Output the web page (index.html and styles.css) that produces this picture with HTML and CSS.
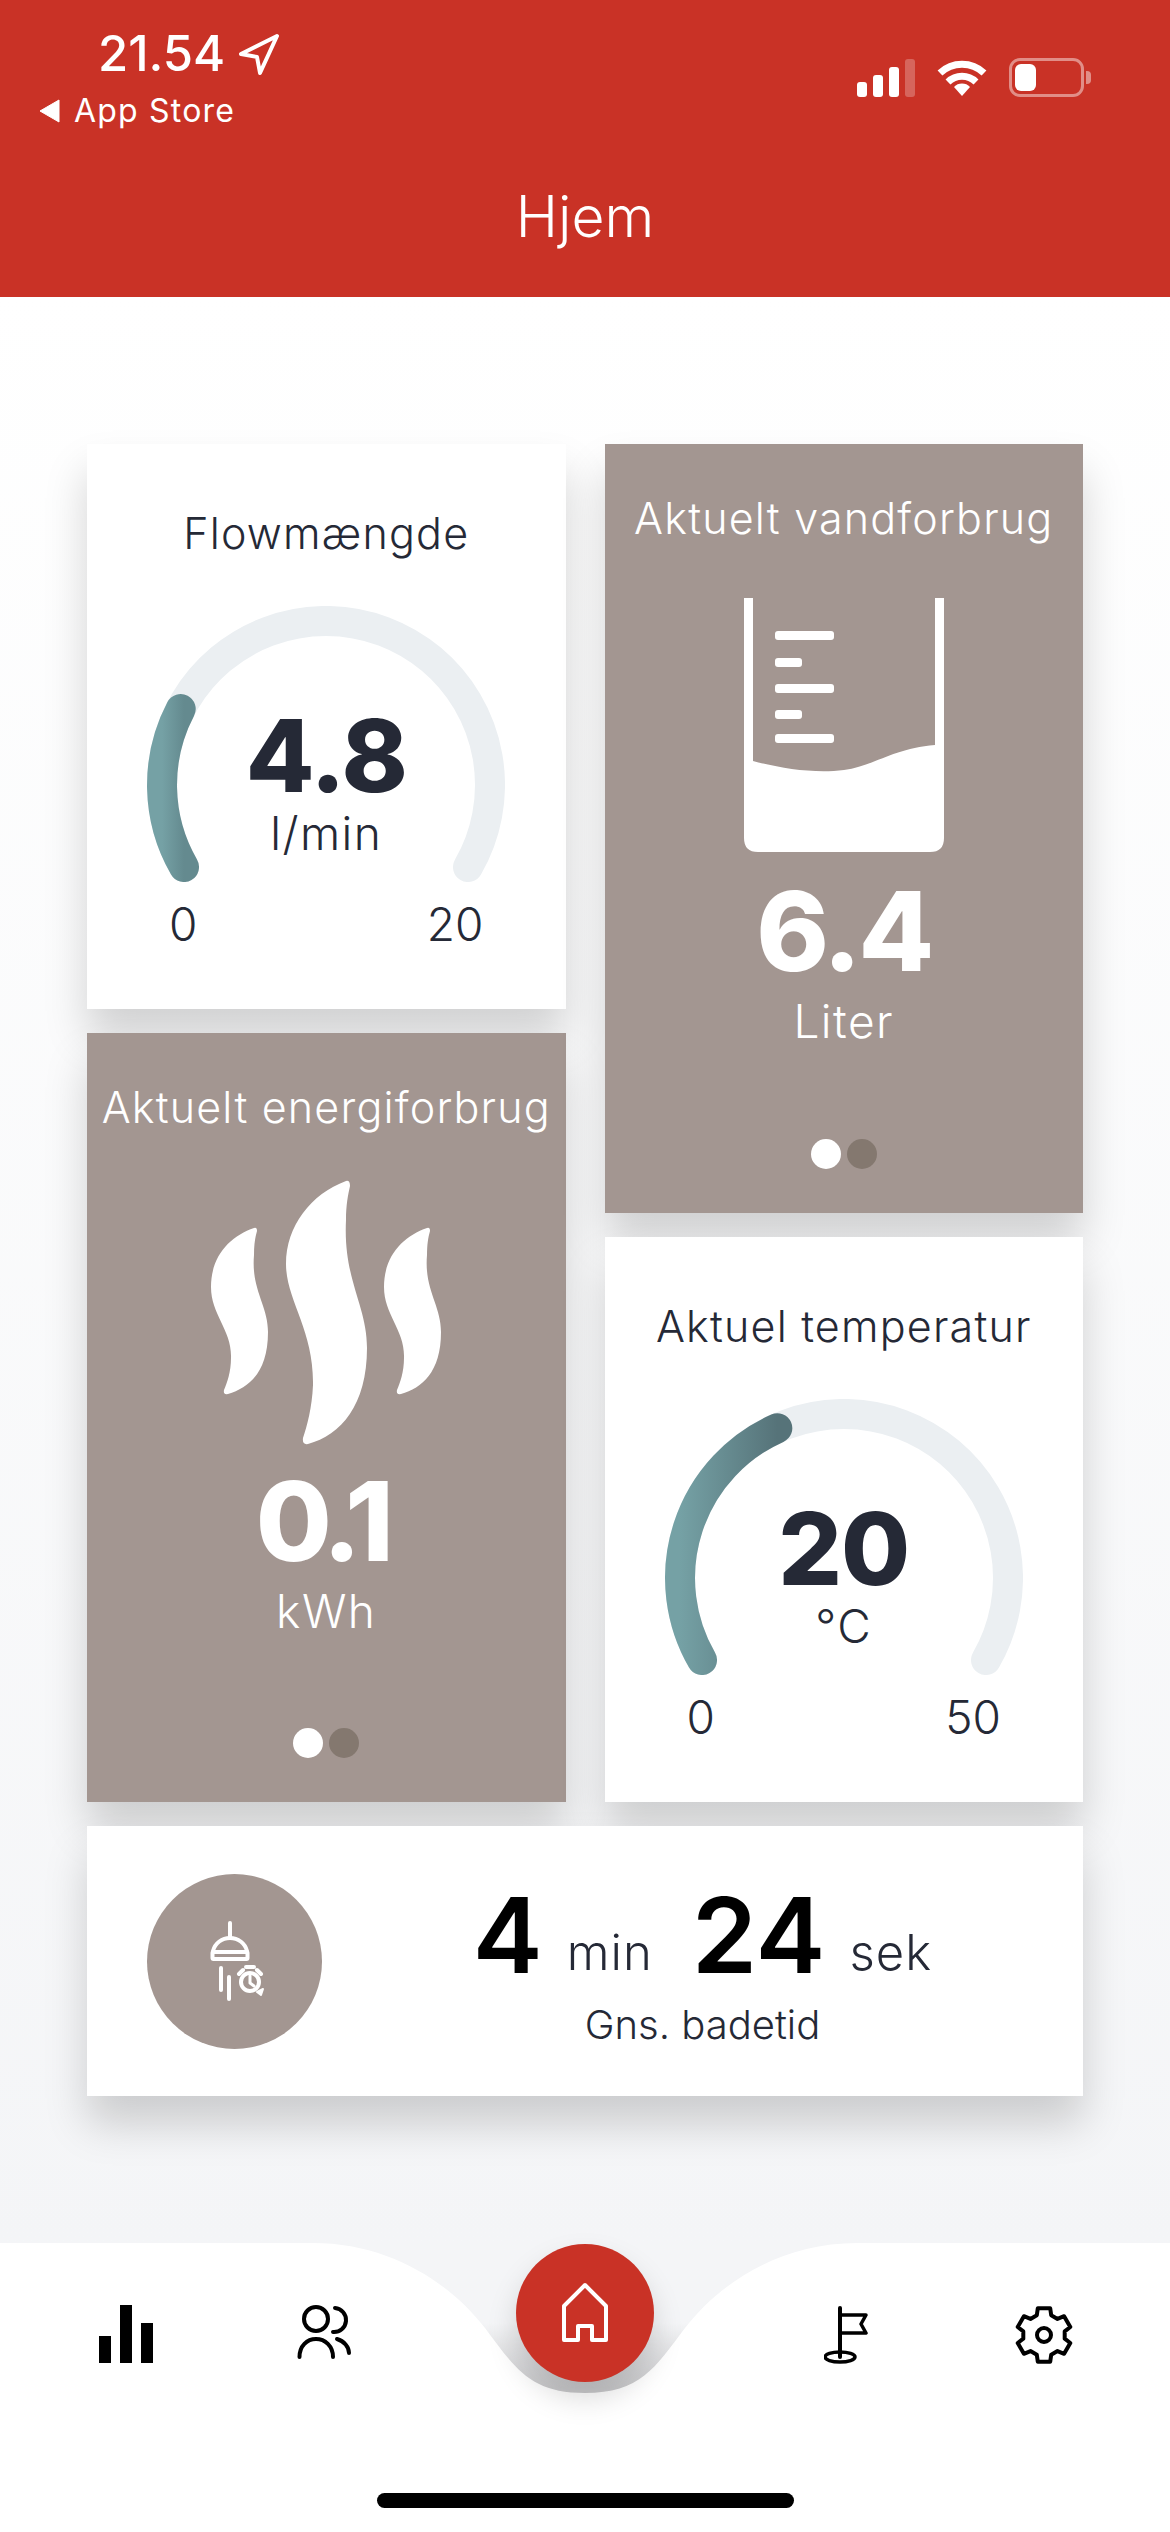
FILE: index.html
```html
<!DOCTYPE html>
<html lang="da">
<head>
    <meta charset="UTF-8">
    <title>Hjem</title>
    <link rel="stylesheet" href="styles.css">
</head>
<body>
    <header class="top-bar">
        <div class="status-bar">
            <div class="status-left">
                <div class="time-row">
                    <span class="time">21.54</span>
                    <svg class="location-icon" width="42" height="42" viewBox="0 0 42 42"><path d="M39 3 L3 21 L19 24 L22 40 Z" fill="none" stroke="#fff" stroke-width="4" stroke-linejoin="round"/></svg>
                </div>
                <div class="back-row">
                    <svg width="21" height="24" viewBox="0 0 21 24"><path d="M20 1 V23 L1 12 Z" fill="#fff" stroke="#fff" stroke-linejoin="round"/></svg>
                    <span>App Store</span>
                </div>
            </div>
            <div class="status-right">
                <svg width="58" height="38" viewBox="0 0 58 38">
                    <rect x="0" y="23" width="10" height="15" rx="3" fill="#fff"/>
                    <rect x="16" y="16" width="10" height="22" rx="3" fill="#fff"/>
                    <rect x="32" y="8" width="10" height="30" rx="3" fill="#fff"/>
                    <rect x="48" y="0" width="10" height="38" rx="3" fill="#fff" opacity="0.25"/>
                </svg>
                <svg width="50" height="38" viewBox="0 0 50 38">
                    <path d="M3 14 A 32 32 0 0 1 47 14" fill="none" stroke="#fff" stroke-width="7"/>
                    <path d="M11 23 A 20 20 0 0 1 39 23" fill="none" stroke="#fff" stroke-width="7"/>
                    <path d="M25 37 L17 28 A 11 11 0 0 1 33 28 Z" fill="#fff"/>
                </svg>
                <div class="battery">
                    <div class="battery-level"></div>
                </div>
            </div>
        </div>
        <h1 class="page-title">Hjem</h1>
    </header>

    <main class="dashboard">
        <div class="columns">
            <div class="column">
                <section class="card card-gauge">
                    <h2 class="card-title">Flowmængde</h2>
                    <div class="gauge">
                        <svg width="358" height="276" viewBox="0 0 358 276">
                            <defs>
                                <linearGradient id="flowFill" x1="0" y1="0" x2="1" y2="0">
                                    <stop offset="0" stop-color="#75a1a5"/>
                                    <stop offset="1" stop-color="#648a8f"/>
                                </linearGradient>
                            </defs>
                            <path d="M37 261 A164 164 0 1 1 321 261" fill="none" stroke="#ebeff2" stroke-width="30" stroke-linecap="round"/>
                            <path d="M37 261 A164 164 0 0 1 33.7 103" fill="none" stroke="url(#flowFill)" stroke-width="30" stroke-linecap="round"/>
                        </svg>
                        <div class="gauge-text">
                            <div class="value">4.8</div>
                            <div class="unit">l/min</div>
                        </div>
                    </div>
                    <div class="gauge-scale"><span>0</span><span>20</span></div>
                </section>

                <section class="card card-brown card-energy">
                    <h2 class="card-title">Aktuelt energiforbrug</h2>
                    <svg class="steam-icon" width="231" height="266" viewBox="0 0 231 266" fill="#fff">
                        <path d="M43 48 C20 56 0 75 0 107 C0 135 21 150 20 178 C20 192 16 203 13 210 Q12 215 17 214 C38 208 57 192 57 152 C57 125 40 110 43 75 C43 65 44 58 46 51 Q46 47 43 48 Z"/>
                        <path d="M135 1 C100 14 75 46 75 84 C75 120 103 150 102 205 C101 228 96 246 92 258 Q91 265 97 264 C130 255 156 225 156 168 C156 125 132 100 135 40 C135 25 137 15 139 6 Q139 0 135 1 Z"/>
                        <path transform="translate(173 0)" d="M43 48 C20 56 0 75 0 107 C0 135 21 150 20 178 C20 192 16 203 13 210 Q12 215 17 214 C38 208 57 192 57 152 C57 125 40 110 43 75 C43 65 44 58 46 51 Q46 47 43 48 Z"/>
                    </svg>
                    <div class="value value-large">0.1</div>
                    <div class="unit">kWh</div>
                    <div class="dots"><span class="dot active"></span><span class="dot"></span></div>
                </section>
            </div>

            <div class="column">
                <section class="card card-brown card-water">
                    <h2 class="card-title">Aktuelt vandforbrug</h2>
                    <svg class="beaker-icon" width="200" height="254" viewBox="0 0 200 254" fill="#fff">
                        <path d="M0 0 H9 V163 C35 170 70 176 100 172 C130 168 150 150 191 147 V0 H200 V240 Q200 254 186 254 H14 Q0 254 0 240 Z"/>
                        <rect x="31" y="33" width="59" height="9" rx="3"/>
                        <rect x="31" y="60" width="27" height="9" rx="3"/>
                        <rect x="31" y="86" width="59" height="9" rx="3"/>
                        <rect x="31" y="112" width="27" height="9" rx="3"/>
                        <rect x="31" y="136" width="59" height="9" rx="3"/>
                    </svg>
                    <div class="value value-large">6.4</div>
                    <div class="unit">Liter</div>
                    <div class="dots"><span class="dot active"></span><span class="dot"></span></div>
                </section>

                <section class="card card-gauge">
                    <h2 class="card-title">Aktuel temperatur</h2>
                    <div class="gauge">
                        <svg width="358" height="276" viewBox="0 0 358 276">
                            <defs>
                                <linearGradient id="tempFill" x1="0" y1="0" x2="1" y2="0">
                                    <stop offset="0" stop-color="#75a1a5"/>
                                    <stop offset="1" stop-color="#567379"/>
                                </linearGradient>
                            </defs>
                            <path d="M37 261 A164 164 0 1 1 321 261" fill="none" stroke="#ebeff2" stroke-width="30" stroke-linecap="round"/>
                            <path d="M37 261 A164 164 0 0 1 112.3 29.2" fill="none" stroke="url(#tempFill)" stroke-width="30" stroke-linecap="round"/>
                        </svg>
                        <div class="gauge-text">
                            <div class="value">20</div>
                            <div class="unit">°C</div>
                        </div>
                    </div>
                    <div class="gauge-scale"><span>0</span><span>50</span></div>
                </section>
            </div>
        </div>

        <section class="card card-time">
            <div class="shower-badge">
                <svg width="60" height="90" viewBox="0 0 60 90" fill="none" stroke="#fff" stroke-width="4" stroke-linecap="round" stroke-linejoin="round">
                    <path d="M25 7 V22"/>
                    <path d="M8 35 C10 27 17 22 25 22 S40 27 42 35"/>
                    <rect x="7.5" y="36" width="35" height="7" rx="1"/>
                    <path d="M16 52 V74"/>
                    <path d="M24 61 V83"/>
                    <circle cx="45" cy="66" r="9"/>
                    <path d="M45 60 V67 L49 70" stroke-width="3"/>
                    <path d="M34 58 L38 54 M56 58 L52 54 M41 51 H49"/>
                    <path d="M52 76 L58 73 L56 79 Z" fill="#fff" stroke-width="2"/>
                </svg>
            </div>
            <div class="time-info">
                <div class="time-row-large">
                    <span class="time-number">4</span><span class="time-unit">min</span><span class="time-number time-seconds">24</span><span class="time-unit">sek</span>
                </div>
                <div class="time-label">Gns. badetid</div>
            </div>
        </section>
    </main>

    <nav class="bottom-nav">
        <svg class="nav-shape" width="1170" height="289" viewBox="0 0 1170 289"><path d="M0 0 H313 C390 0 450 40 485 85 C515 125 530 150 585 150 C640 150 655 125 685 85 C720 40 780 0 857 0 H1170 V289 H0 Z" fill="#fff"/></svg>
        <div class="nav-items">
            <a class="nav-item">
                <svg width="54" height="58" viewBox="0 0 54 58" fill="#000"><rect x="0" y="31" width="12" height="27"/><rect x="21" y="0" width="12" height="58"/><rect x="42" y="18" width="12" height="40"/></svg>
            </a>
            <a class="nav-item">
                <svg width="54" height="56" viewBox="0 0 54 56" fill="none" stroke="#000" stroke-width="4" stroke-linecap="round"><circle cx="19" cy="14" r="12"/><path d="M2.5 52 C2.5 41 10 34 19 34 S36 41 36 52"/><path d="M38 3 A10 10 0 0 1 36 27"/><path d="M40 34 C47 36 52 42 52 48"/></svg>
            </a>
            <a class="nav-home">
                <svg width="50" height="62" viewBox="0 0 50 62" fill="none" stroke="#fff" stroke-width="4" stroke-linejoin="round"><path d="M25 3 L4 24 V58 H18 V44 H32 V58 H46 V24 Z"/></svg>
            </a>
            <a class="nav-item">
                <svg width="44" height="60" viewBox="0 0 44 60" fill="none" stroke="#000" stroke-width="4" stroke-linecap="round" stroke-linejoin="round"><path d="M16 3 V52"/><path d="M16 10 H42 L37 19 L42 28 H16" stroke-width="3.5"/><ellipse cx="16" cy="52" rx="15" ry="5" stroke-width="3.5"/></svg>
            </a>
            <a class="nav-item">
                <svg width="60" height="60" viewBox="0 0 60 60" fill="none" stroke="#000" stroke-width="4" stroke-linejoin="round"><polygon points="22.8,10.3 23.8,3.2 36.2,3.2 37.2,10.3 43.5,13.9 50.1,11.2 56.3,22 50.7,26.4 50.7,33.7 56.3,38 50.1,48.8 43.5,46.1 37.2,49.7 36.2,56.8 23.8,56.8 22.8,49.7 16.5,46.1 9.9,48.8 3.7,38 9.3,33.7 9.3,26.4 3.7,22 9.9,11.2 16.5,13.9"/><circle cx="30" cy="30" r="7"/></svg>
            </a>
        </div>
        <div class="home-indicator"></div>
    </nav>
</body>
</html>
```

FILE: styles.css
```css
* {
    box-sizing: border-box;
}

body {
    margin: 0;
    width: 1170px;
    height: 2532px;
    overflow: hidden;
    font-family: Inter, "Liberation Sans", sans-serif;
    color: #252936;
    background: #fff;
    display: flex;
    flex-direction: column;
}

/* red header with status bar */
.top-bar {
    height: 297px;
    background-color: #c93226;
    color: #fff;
}

.status-bar {
    display: flex;
    justify-content: space-between;
    align-items: flex-start;
    padding: 30px 86px 0 39px;
}

.time-row {
    display: flex;
    align-items: center;
    gap: 13px;
    padding-left: 59px;
    height: 48px;
}

.time {
    font-size: 49px;
    line-height: 48px;
    font-weight: 500;
}

.back-row {
    display: flex;
    align-items: center;
    gap: 14px;
    margin-top: 17px;
    font-size: 32px;
    line-height: 32px;
    letter-spacing: 1.2px;
}

.status-right {
    display: flex;
    align-items: center;
    gap: 22px;
    margin-top: 28px;
}

.battery {
    position: relative;
    width: 75px;
    height: 39px;
    border: 3px solid rgba(255,255,255,0.45);
    border-radius: 11px;
    padding: 3px;
}

.battery::after {
    content: "";
    position: absolute;
    right: -10px;
    top: 10px;
    width: 5px;
    height: 13px;
    background: rgba(255,255,255,0.45);
    border-radius: 0 4px 4px 0;
}

.battery-level {
    width: 21px;
    height: 100%;
    background: #fff;
    border-radius: 6px;
}

.page-title {
    margin: 62px 0 0;
    text-align: center;
    font-size: 57px;
    line-height: 56px;
    font-weight: 300;
}

/* cards */
.dashboard {
    height: 1946px;
    padding: 147px 87px 0;
    background: linear-gradient(#fff, #f4f5f7);
}

.columns {
    display: flex;
    gap: 39px;
}

.column {
    width: 479px;
    display: flex;
    flex-direction: column;
    gap: 24px;
}

.card {
    background: #fff;
    box-shadow: 0 28px 40px rgba(0,0,0,0.17);
    display: flex;
    flex-direction: column;
    align-items: center;
}

.card-gauge {
    height: 565px;
    padding-top: 67px;
}

.card-brown {
    height: 769px;
    padding: 52px 0 44px;
    background-color: #a39691;
    color: #fff;
}

.card-title {
    margin: 0;
    font-size: 43px;
    line-height: 44px;
    font-weight: 300;
    letter-spacing: 1.2px;
    white-space: nowrap;
}

.gauge {
    position: relative;
    width: 358px;
    height: 276px;
    margin-top: 51px;
}

.gauge svg {
    display: block;
}

.gauge-text {
    position: absolute;
    left: 0;
    right: 0;
    top: 100px;
    display: flex;
    flex-direction: column;
    align-items: center;
}

.value {
    font-size: 100px;
    line-height: 100px;
    font-weight: 800;
    letter-spacing: -1px;
}

.unit {
    margin-top: 5px;
    font-size: 46px;
    line-height: 44px;
    font-weight: 300;
    letter-spacing: 1.5px;
}

.gauge-scale {
    width: 100%;
    display: flex;
    justify-content: space-between;
    margin-top: 20px;
    padding: 0 82px;
    font-size: 46px;
    line-height: 44px;
    font-weight: 300;
}

.beaker-icon {
    margin-top: 58px;
    flex-shrink: 0;
}

.steam-icon {
    margin-top: 51px;
    flex-shrink: 0;
}

.value-large {
    font-size: 110px;
    line-height: 110px;
    margin-top: 24px;
    letter-spacing: -3px;
}

.card-energy .value-large {
    margin: 20px 0 0 -9px;
    letter-spacing: -6px;
}

.card-brown .unit {
    margin-top: 13px;
}

.dots {
    display: flex;
    gap: 6px;
    margin-top: auto;
}

.dot {
    width: 30px;
    height: 30px;
    border-radius: 50%;
    background: #84786f;
}

.dot.active {
    background: #fff;
}

/* average shower time */
.card-time {
    position: relative;
    height: 270px;
    margin-top: 24px;
    flex-direction: row;
    padding: 5px 0 0 60px;
}

.shower-badge {
    width: 175px;
    height: 175px;
    border-radius: 50%;
    background-color: #a39691;
    display: flex;
    align-items: center;
    justify-content: center;
    flex-shrink: 0;
    margin-top: -5px;
}

.time-info {
    flex: 1;
    text-align: center;
}

.time-row-large {
    color: #000;
    line-height: 103px;
    height: 103px;
}

.time-number {
    font-size: 105px;
    font-weight: 600;
}

.time-seconds {
    margin-left: 39px;
}

.time-unit {
    margin-left: 24px;
    font-size: 49px;
    font-weight: 300;
    color: #252936;
    letter-spacing: 1px;
    vertical-align: 3px;
}

.time-label {
    margin-top: 20px;
    font-size: 40px;
    line-height: 38px;
    font-weight: 300;
}

/* bottom navigation */
.bottom-nav {
    position: relative;
    height: 289px;
    background: linear-gradient(#f4f5f7 80px, #cacacc 145px);
}

.nav-shape {
    position: absolute;
    left: 0;
    top: 0;
}

.nav-items {
    position: relative;
    display: grid;
    grid-template-columns: 198px 198px 324px 198px 198px;
    padding: 0 27px;
    height: 250px;
}

.nav-item {
    display: flex;
    justify-content: center;
    align-items: flex-start;
    padding-top: 62px;
}

.nav-home {
    justify-self: center;
    align-self: flex-start;
    width: 138px;
    height: 138px;
    margin-top: 1px;
    border-radius: 50%;
    background-color: #c93226;
    box-shadow: 0 16px 30px rgba(0,0,0,0.15);
    display: flex;
    align-items: center;
    justify-content: center;
}

.home-indicator {
    position: relative;
    width: 417px;
    height: 15px;
    margin: 0 auto;
    background: #000;
    border-radius: 8px;
}
```
